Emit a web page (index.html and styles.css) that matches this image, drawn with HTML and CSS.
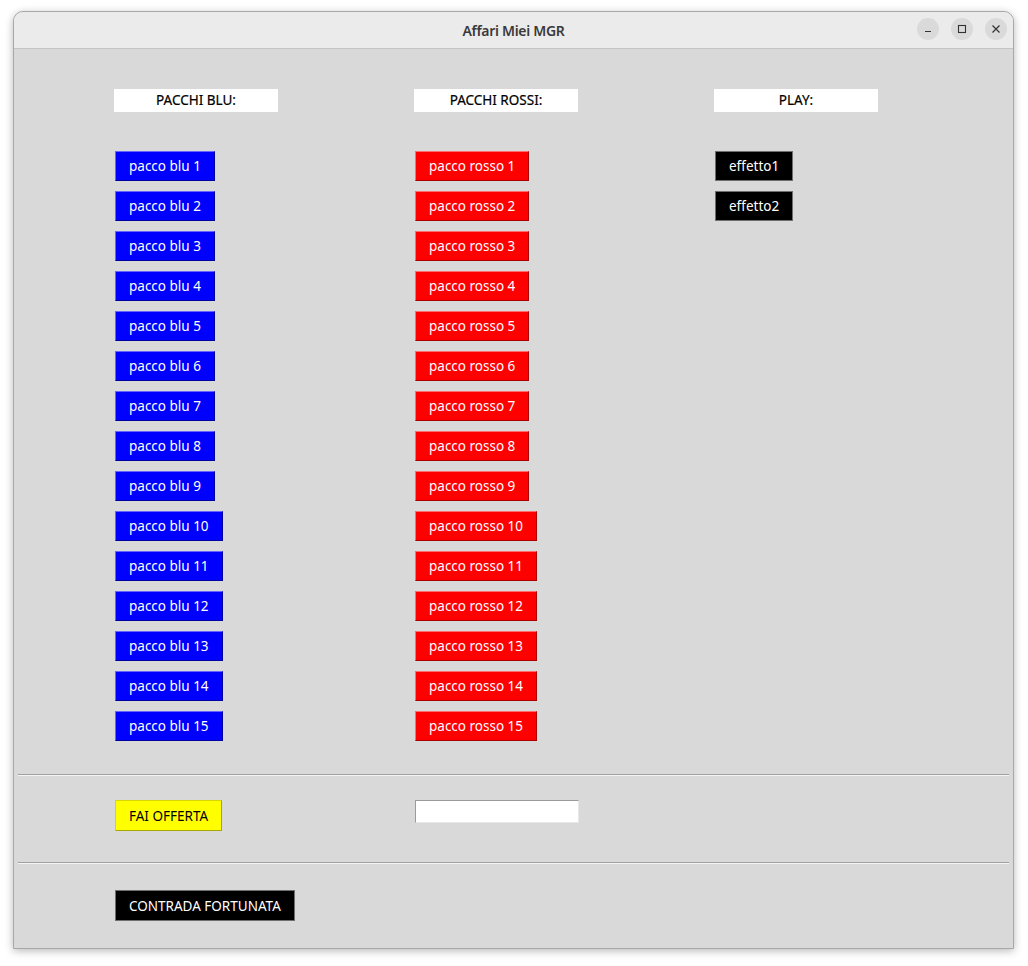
FILE: index.html
```html
<!DOCTYPE html>
<html lang="it">
<head>
<meta charset="utf-8">
<title>Affari Miei MGR</title>
<link rel="stylesheet" href="styles.css">
</head>
<body>
<div class="window">
  <div class="titlebar">
    <div class="title">Affari Miei MGR</div>
    <div class="controls">
      <span class="ctl"><svg width="10" height="10" viewBox="0 0 10 10"><path d="M2 7.5h6" stroke="#333" stroke-width="1.2"/></svg></span>
      <span class="ctl"><svg width="10" height="10" viewBox="0 0 10 10"><rect x="1.5" y="1.5" width="7" height="7" fill="none" stroke="#333" stroke-width="1.1"/></svg></span>
      <span class="ctl"><svg width="10" height="10" viewBox="0 0 10 10"><path d="M1.5 1.5l7 7M8.5 1.5l-7 7" stroke="#333" stroke-width="1.2"/></svg></span>
    </div>
  </div>
  <div class="content">
    <div class="columns">
      <div class="col">
        <div class="label">PACCHI BLU:</div>
        <div class="stack">
          <button class="btn blue">pacco blu 1</button>
          <button class="btn blue">pacco blu 2</button>
          <button class="btn blue">pacco blu 3</button>
          <button class="btn blue">pacco blu 4</button>
          <button class="btn blue">pacco blu 5</button>
          <button class="btn blue">pacco blu 6</button>
          <button class="btn blue">pacco blu 7</button>
          <button class="btn blue">pacco blu 8</button>
          <button class="btn blue">pacco blu 9</button>
          <button class="btn blue">pacco blu 10</button>
          <button class="btn blue">pacco blu 11</button>
          <button class="btn blue">pacco blu 12</button>
          <button class="btn blue">pacco blu 13</button>
          <button class="btn blue">pacco blu 14</button>
          <button class="btn blue">pacco blu 15</button>
        </div>
      </div>
      <div class="col">
        <div class="label">PACCHI ROSSI:</div>
        <div class="stack">
          <button class="btn red">pacco rosso 1</button>
          <button class="btn red">pacco rosso 2</button>
          <button class="btn red">pacco rosso 3</button>
          <button class="btn red">pacco rosso 4</button>
          <button class="btn red">pacco rosso 5</button>
          <button class="btn red">pacco rosso 6</button>
          <button class="btn red">pacco rosso 7</button>
          <button class="btn red">pacco rosso 8</button>
          <button class="btn red">pacco rosso 9</button>
          <button class="btn red">pacco rosso 10</button>
          <button class="btn red">pacco rosso 11</button>
          <button class="btn red">pacco rosso 12</button>
          <button class="btn red">pacco rosso 13</button>
          <button class="btn red">pacco rosso 14</button>
          <button class="btn red">pacco rosso 15</button>
        </div>
      </div>
      <div class="col">
        <div class="label">PLAY:</div>
        <div class="stack">
          <button class="btn black">effetto1</button>
          <button class="btn black">effetto2</button>
        </div>
      </div>
    </div>
    <hr class="sep sep-first">
    <div class="row offer-row">
      <div class="col-cell"><button class="btn yellow">FAI OFFERTA</button></div>
      <div class="col-cell"><input class="entry" type="text"></div>
    </div>
    <hr class="sep">
    <div class="row lucky-row">
      <div class="col-cell"><button class="btn black">CONTRADA FORTUNATA</button></div>
    </div>
  </div>
</div>
</body>
</html>
```

FILE: styles.css
```css
html, body {
  margin: 0;
  padding: 0;
  background: #ffffff;
}
body {
  width: 1028px;
  height: 966px;
  overflow: hidden;
  font-family: "Noto Sans", "Open Sans", sans-serif;
}
.window {
  margin: 11px 0 0 13px;
  width: 1001px;
  height: 938px;
  box-sizing: border-box;
  border: 1px solid #a8a8a8;
  border-radius: 10px 10px 0 0;
  background: #d9d9d9;
  box-shadow: 0 2px 8px rgba(0,0,0,0.28);
  overflow: hidden;
  display: flex;
  flex-direction: column;
}
.titlebar {
  height: 36px;
  flex: none;
  background: #ebebeb;
  border-bottom: 1px solid #c4c4c4;
  display: flex;
  align-items: center;
  justify-content: center;
  position: relative;
}
.title {
  font-family: "Noto Sans", sans-serif;
  font-size: 14px;
  font-weight: 600;
  color: #3a3a3a;
  letter-spacing: -0.3px;
}
.controls {
  position: absolute;
  right: 6px;
  top: 6px;
  display: flex;
  gap: 12px;
}
.ctl {
  width: 22px;
  height: 22px;
  border-radius: 50%;
  background: #dadada;
  display: flex;
  align-items: center;
  justify-content: center;
}
.content {
  padding: 40px 0 0 0;
  display: flex;
  flex-direction: column;
}
.columns {
  display: flex;
  padding-left: 100px;
}
.col {
  flex: none;
  width: 300px;
  display: flex;
  flex-direction: column;
  align-items: flex-start;
}
.label {
  width: 164px;
  height: 23px;
  box-sizing: border-box;
  padding-top: 1px;
  background: #ffffff;
  font-size: 13.5px;
  font-weight: 400;
  color: #000;
  -webkit-text-stroke: 0.2px #000;
  display: flex;
  align-items: center;
  justify-content: center;
  line-height: 1;
}
.stack {
  margin-top: 39px;
  margin-left: 1px;
  display: flex;
  flex-direction: column;
  align-items: flex-start;
  gap: 10px;
}
.btn {
  height: 30px;
  box-sizing: border-box;
  padding: 2px 13px 0;
  font-family: "Noto Sans", "Open Sans", sans-serif;
  font-size: 13.5px;
  line-height: 1;
  border: 1px solid;
  margin: 0;
  display: flex;
  align-items: center;
  white-space: nowrap;
}
.blue {
  background: #0000ff;
  color: #ffffff;
  border-color: #6666ff #00009e #00009e #6666ff;
}
.red {
  background: #ff0000;
  color: #ffffff;
  border-color: #ff6e6e #a80000 #a80000 #ff6e6e;
}
.black {
  background: #000000;
  color: #ffffff;
  border-color: #6e6e6e;
}
.yellow {
  background: #ffff00;
  color: #000000;
  border-color: #d6d600 #a8a800 #a8a800 #d6d600;
  height: 31px;
}
.lucky-row .btn {
  height: 31px;
}
.sep {
  margin: 0 4px;
  height: 0;
  border: 0;
  border-top: 1px solid #a0a0a0;
  border-bottom: 1px solid #f4f4f4;
}
.sep-first {
  margin-top: 33px;
}
.row {
  display: flex;
  align-items: flex-start;
  padding-left: 101px;
}
.col-cell {
  flex: none;
  width: 300px;
  display: flex;
  align-items: flex-start;
}
.offer-row {
  padding-top: 24px;
  height: 62px;
}
.entry {
  display: block;
  width: 164px;
  height: 23px;
  box-sizing: border-box;
  margin: 0;
  border: 1px solid;
  border-color: #9a9a9a #e8e8e8 #e8e8e8 #9a9a9a;
  background: #ffffff;
  padding: 0 3px;
  outline: none;
}
.lucky-row {
  padding-top: 26px;
}
```
